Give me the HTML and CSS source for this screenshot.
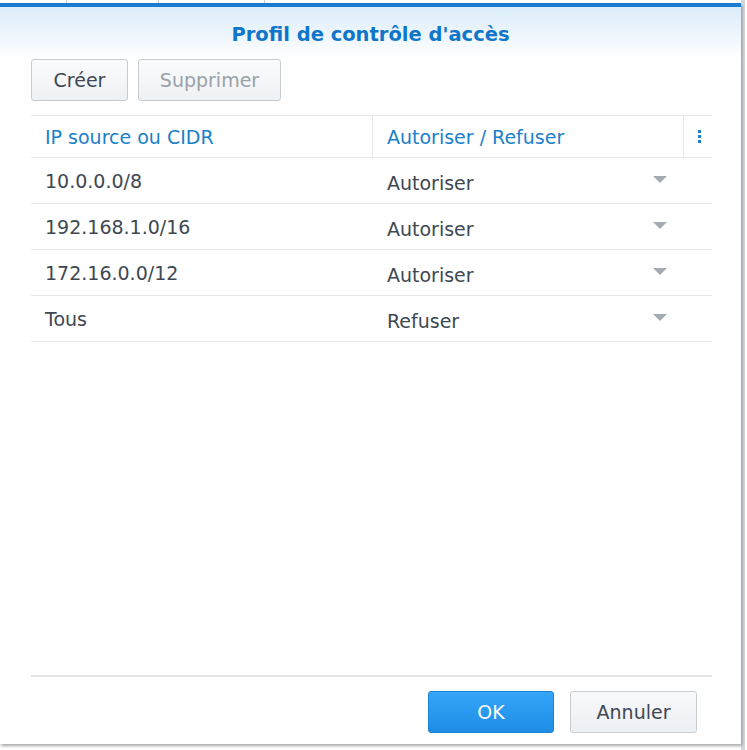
FILE: index.html
```html
<!DOCTYPE html>
<html lang="fr">
<head>
<meta charset="utf-8">
<title>Profil de contrôle d'accès</title>
<link rel="stylesheet" href="styles.css">
</head>
<body>
<div class="backdrop">
  <div class="tabs"><span class="tab t1"></span><span class="tab t2"></span><span class="tab t3"></span></div>
  <div class="dialog">
    <div class="title-bar"><h1 class="title">Profil de contrôle d'accès</h1></div>
    <div class="toolbar">
      <button class="btn btn-create">Créer</button>
      <button class="btn btn-delete" disabled>Supprimer</button>
    </div>
    <div class="grid">
      <div class="row head">
        <div class="cell c1">IP source ou CIDR</div>
        <div class="cell c2">Autoriser / Refuser</div>
        <div class="cell c3"><span class="dots"><i></i><i></i><i></i></span></div>
      </div>
      <div class="row">
        <div class="cell c1">10.0.0.0/8</div>
        <div class="cell c2"><span class="val">Autoriser</span><span class="caret"></span></div>
        <div class="cell c3"></div>
      </div>
      <div class="row">
        <div class="cell c1">192.168.1.0/16</div>
        <div class="cell c2"><span class="val">Autoriser</span><span class="caret"></span></div>
        <div class="cell c3"></div>
      </div>
      <div class="row">
        <div class="cell c1">172.16.0.0/12</div>
        <div class="cell c2"><span class="val">Autoriser</span><span class="caret"></span></div>
        <div class="cell c3"></div>
      </div>
      <div class="row">
        <div class="cell c1">Tous</div>
        <div class="cell c2"><span class="val">Refuser</span><span class="caret"></span></div>
        <div class="cell c3"></div>
      </div>
    </div>
    <div class="spacer"></div>
    <div class="footer">
      <button class="btn btn-ok">OK</button>
      <button class="btn btn-cancel">Annuler</button>
    </div>
  </div>
</div>
</body>
</html>
```

FILE: styles.css
```css
html, body {
  margin: 0;
  padding: 0;
}
body {
  width: 747px;
  height: 750px;
  overflow: hidden;
  background: #ffffff;
  font-family: "DejaVu Sans", Verdana, sans-serif;
  font-size: 19px;
  color: #3e4852;
}
.backdrop {
  position: relative;
  width: 747px;
  height: 750px;
  background: linear-gradient(to right, #ffffff 0, #ffffff 741px, #d4d8dc 741px, #d4d8dc 745px, #ffffff 745px);
}
.tabs {
  position: absolute;
  left: 0;
  top: 0;
  width: 740px;
  height: 4px;
}
.tab {
  position: absolute;
  top: 0;
  height: 4px;
  border-right: 1px solid #c9cdd1;
}
.t1 { left: 0; width: 66px; }
.t2 { left: 74px; width: 84px; }
.t3 { left: 164px; width: 100px; }
.dialog {
  position: absolute;
  left: 0;
  top: 3px;
  width: 741px;
  height: 741px;
  box-sizing: border-box;
  background: #ffffff;
  border-top: 4px solid #1b7ccf;
  box-shadow: 1px 2px 3px rgba(0, 0, 0, 0.35);
  display: flex;
  flex-direction: column;
}
.title-bar {
  height: 52px;
  background: linear-gradient(to bottom, #dcecfa 0%, #eef6fd 55%, #ffffff 100%);
  display: flex;
  align-items: center;
  justify-content: center;
}
.title {
  margin: 0;
  font-family: "DejaVu Sans", sans-serif;
  font-weight: bold;
  font-size: 19.5px;
  color: #0f76c9;
  padding-top: 3px;
}
.toolbar {
  display: flex;
  gap: 10px;
  padding-left: 31px;
}
.btn {
  font-family: "DejaVu Sans", Verdana, sans-serif;
  font-size: 19px;
  height: 42px;
  box-sizing: border-box;
  border-radius: 3px;
  border: 1px solid #c6cbd0;
  background: linear-gradient(to bottom, #fafbfc, #eef1f4);
  color: #3e4852;
  padding: 0;
  cursor: default;
}
.btn-create { width: 97px; }
.btn-delete { width: 143px; color: #9aa1a8; }
.grid {
  margin: 14px 29px 0 31px;
  border-top: 1px solid #e6e8ea;
}
.row {
  display: flex;
  height: 46px;
  box-sizing: border-box;
  border-bottom: 1px solid #e6e8ea;
}
.row.head {
  height: 42px;
  color: #1a80c9;
}
.cell {
  display: flex;
  align-items: center;
  box-sizing: border-box;
}
.c1 { width: 341px; padding-left: 14px; }
.c2 { width: 311px; padding-left: 15px; padding-right: 16px; justify-content: space-between; }
.c3 { flex: 1; justify-content: center; }
.head .c2 { border-left: 1px solid #e6e8ea; padding-left: 14px; }
.head .c3 { border-left: 1px solid #e6e8ea; }
.row:not(.head) .c1 { padding-top: 1px; }
.val { padding-top: 4px; }
.dots {
  display: flex;
  flex-direction: column;
  gap: 2px;
  margin-left: 2px;
}
.dots i {
  display: block;
  width: 3px;
  height: 3px;
  background: #1a80c9;
}
.caret {
  width: 0;
  height: 0;
  border-left: 7px solid transparent;
  border-right: 7px solid transparent;
  border-top: 7px solid #a4aab1;
  margin-top: -2px;
}
.spacer { flex: 1; }
.footer {
  margin: 0 29px 0 31px;
  border-top: 2px solid #e3e5e7;
  padding: 14px 15px 11px 0;
  display: flex;
  justify-content: flex-end;
  gap: 16px;
}
.btn-ok {
  width: 126px;
  border-color: #1b84d6;
  background: linear-gradient(to bottom, #35a6f8, #1d8de6);
  color: #ffffff;
}
.btn-cancel {
  width: 127px;
  border-color: #c8cdd2;
  background: linear-gradient(to bottom, #f8f9fb, #eceff3);
}
```
